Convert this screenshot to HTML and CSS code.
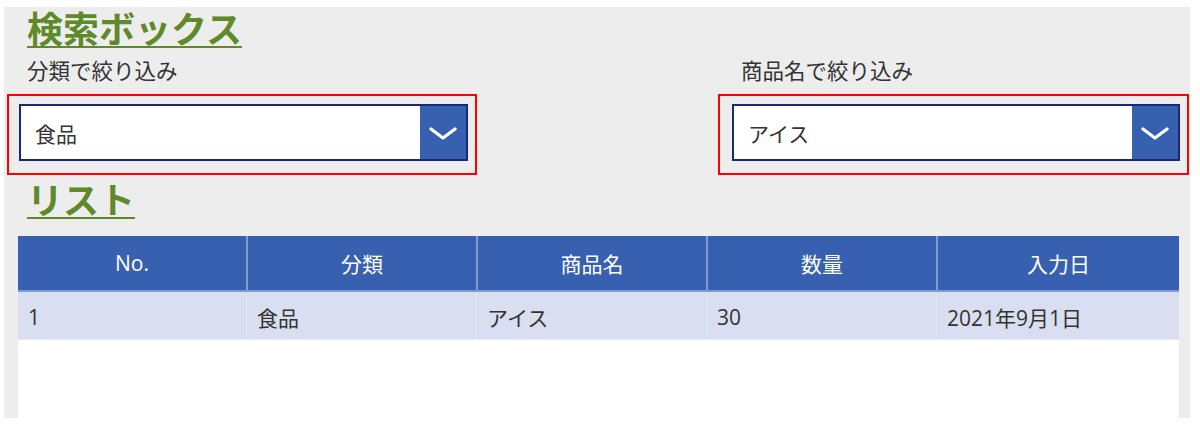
FILE: index.html
```html
<!DOCTYPE html>
<html lang="ja">
<head>
<meta charset="utf-8">
<title>検索ボックス</title>
<link rel="stylesheet" href="styles.css">
</head>
<body>
<div class="canvas">
  <h1 class="heading">検索ボックス</h1>
  <div class="filters">
    <div class="filter filter-left">
      <div class="label">分類で絞り込み</div>
      <div class="frame">
        <div class="dropdown">
          <div class="value">食品</div>
          <div class="btn">
            <svg width="28" height="13" viewBox="0 0 28 13"><path d="M2 2 L14 11 L26 2" fill="none" stroke="#fff" stroke-width="3.2" stroke-linecap="round" stroke-linejoin="round"/></svg>
          </div>
        </div>
      </div>
    </div>
    <div class="filter filter-right">
      <div class="label">商品名で絞り込み</div>
      <div class="frame">
        <div class="dropdown">
          <div class="value">アイス</div>
          <div class="btn">
            <svg width="28" height="13" viewBox="0 0 28 13"><path d="M2 2 L14 11 L26 2" fill="none" stroke="#fff" stroke-width="3.2" stroke-linecap="round" stroke-linejoin="round"/></svg>
          </div>
        </div>
      </div>
    </div>
  </div>
  <h2 class="heading heading-list">リスト</h2>
  <div class="table">
    <div class="row head">
      <div class="cell">No.</div>
      <div class="cell">分類</div>
      <div class="cell">商品名</div>
      <div class="cell">数量</div>
      <div class="cell">入力日</div>
    </div>
    <div class="row data">
      <div class="cell">1</div>
      <div class="cell">食品</div>
      <div class="cell">アイス</div>
      <div class="cell">30</div>
      <div class="cell">2021年9月1日</div>
    </div>
  </div>
</div>
</body>
</html>
```
FILE: styles.css
```css
* { box-sizing: border-box; }
html, body { margin: 0; padding: 0; background: #fff; }
body {
  font-family: "Open Sans", "Noto Sans CJK JP", sans-serif;
  color: #333;
}
.canvas {
  margin: 7px 0 0 4px;
  width: 1186px;
  height: 411px;
  background: #ededed;
  display: flex;
  flex-direction: column;
}
.heading {
  margin: 0;
  padding-left: 23px;
  font-family: "Noto Sans CJK JP", sans-serif;
  font-weight: 700;
  font-size: 36px;
  line-height: 40px;
  color: #5e8a2a;
  text-decoration: underline;
  text-decoration-thickness: 2px;
  text-underline-offset: 3px;
}
.filters {
  display: flex;
  margin-top: 8px;
  padding-left: 3px;
  gap: 241px;
}
.filter { width: 470px; display: flex; flex-direction: column; }
.filter-right { width: 471px; }
.label {
  font-family: "Noto Sans CJK JP", sans-serif;
  font-size: 21.5px;
  line-height: 30px;
  height: 39px;
  color: #333;
  padding-left: 20px;
}
.filter-right .label { padding-left: 23px; }
.frame {
  border: 2px solid #f00;
  height: 81px;
  padding: 8px 7px 0 10px;
}
.filter-right .frame { padding-left: 12px; }
.dropdown {
  display: flex;
  height: 57px;
  border: 2px solid #1b2878;
  background: #fff;
}
.value {
  flex: 1;
  padding-left: 14px;
  display: flex;
  align-items: center;
  font-family: "Noto Sans CJK JP", sans-serif;
  font-size: 21px;
  color: #333;
}
.btn {
  width: 46px;
  background: #3760b0;
  display: flex;
  align-items: center;
  justify-content: center;
}
.btn svg { margin-top: 1px; }
.heading-list {
  margin-top: 3px;
  font-size: 36px;
}
.table {
  margin-top: 18px;
  margin-left: 14px;
  width: 1161px;
  flex: 1;
  background: #fff;
}
.row {
  display: grid;
  grid-template-columns: 228px 230px 230px 230px 1fr;
}
.head {
  height: 56px;
  background: #3760b0;
  border-bottom: 2px solid #7f9bd3;
}
.head .cell {
  color: #fff;
  font-size: 21px;
  display: flex;
  align-items: center;
  justify-content: center;
}
.head .cell + .cell { border-left: 2px solid #7f9bd3; }
.data {
  height: 48px;
  background: #d9dff0;
  border-bottom: 1px solid #e6eaf5;
}
.data .cell {
  font-size: 21px;
  color: #333;
  display: flex;
  align-items: center;
  padding-left: 10px;
  padding-top: 2px;
}
.data .cell + .cell { border-left: 1px solid #dfe4f2; }
```
